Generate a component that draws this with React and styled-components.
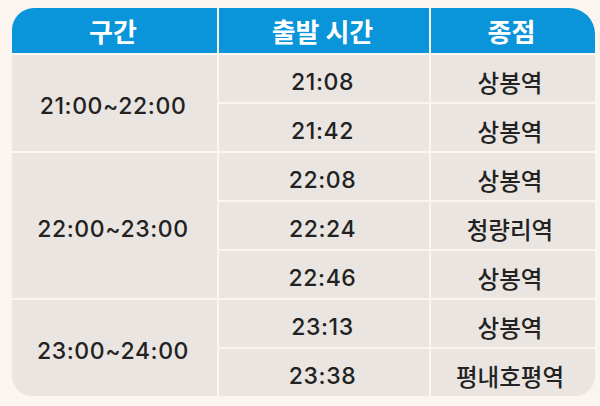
import React from "react";
import styled, { createGlobalStyle } from "styled-components";

const Global = createGlobalStyle`
  html, body { margin: 0; padding: 0; background: #fbf4ef; }
  body { width: 600px; height: 406px; overflow: hidden; }
`;

const Page = styled.div`
  padding: 8px 5px 0 12px;
  font-family: "Noto Sans CJK KR", sans-serif;
`;

const Table = styled.div`
  display: grid;
  grid-template-columns: 205px 210px 164px;
  grid-template-rows: 45px repeat(7, 47px);
  gap: 2px;
  width: 583px;
  background: #faf5f1;
  border-radius: 22px 26px 20px 20px;
  overflow: hidden;
`;

const Head = styled.div`
  background: #0a94d9;
  color: #ffffff;
  font-family: "Noto Sans CJK KR", sans-serif;
  font-weight: 700;
  font-size: 26px;
  display: flex;
  align-items: center;
  justify-content: center;
  padding-bottom: 1px;
  padding-right: 3px;
`;

const Cell = styled.div`
  background: #ebe5e1;
  color: #222;
  display: flex;
  align-items: center;
  justify-content: center;
  grid-row: span ${(p) => p.$span || 1};
  font-family: ${(p) =>
    p.$num ? '"Inter", "Noto Sans CJK KR", sans-serif' : '"Noto Sans CJK KR", sans-serif'};
  font-size: ${(p) => (p.$num ? "23px" : "23.5px")};
  font-weight: 500;
  letter-spacing: ${(p) => (p.$num ? "0.6px" : "0")};
  padding-right: ${(p) => (p.$num ? "3px" : "6px")};
  padding-top: 6px;
`;

const groups = [
  { range: "21:00~22:00", rows: [["21:08", "상봉역"], ["21:42", "상봉역"]] },
  {
    range: "22:00~23:00",
    rows: [["22:08", "상봉역"], ["22:24", "청량리역"], ["22:46", "상봉역"]],
  },
  { range: "23:00~24:00", rows: [["23:13", "상봉역"], ["23:38", "평내호평역"]] },
];

export default function App() {
  return (
    <Page>
      <Global />
      <Table>
        <Head>구간</Head>
        <Head>출발 시간</Head>
        <Head>종점</Head>
        {groups.map((g) => (
          <React.Fragment key={g.range}>
            <Cell $num $span={g.rows.length}>{g.range}</Cell>
            {g.rows.map(([t, s]) => (
              <React.Fragment key={t}>
                <Cell $num>{t}</Cell>
                <Cell>{s}</Cell>
              </React.Fragment>
            ))}
          </React.Fragment>
        ))}
      </Table>
    </Page>
  );
}
